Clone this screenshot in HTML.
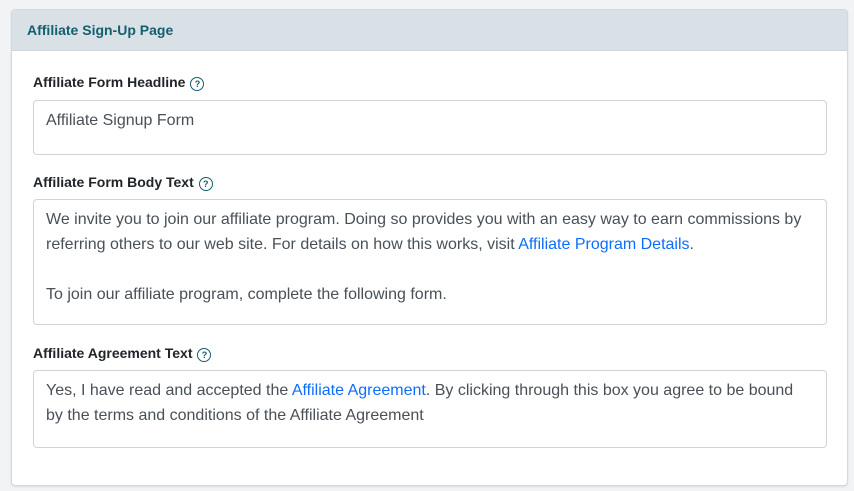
<!DOCTYPE html>
<html><head><style>
body{margin:0;background:#f1f3f5;font-family:"Liberation Sans",Arial,sans-serif;width:854px;height:491px;overflow:hidden}
.card{position:absolute;left:11px;top:9px;width:835px;height:475px;background:#fff;border:1px solid #d3d8dc;border-radius:4px;box-shadow:0 1px 2px rgba(0,0,0,.08);overflow:hidden}
.hd{height:40px;background:#dae1e6;border-bottom:1px solid #cfd6db;color:#145e6e;font-weight:bold;font-size:14px;line-height:41px;padding-left:15px}
.lbl{position:absolute;left:21px;font-size:14px;font-weight:bold;color:#212529}
.q{display:inline-block;width:12px;height:12px;border:1.3px solid #145e6e;border-radius:50%;color:#145e6e;font-size:9px;line-height:12px;text-align:center;margin-left:5px;vertical-align:0px;font-weight:bold}
.box{position:absolute;left:21px;width:768px;border:1px solid #ced4da;border-radius:4px;padding:7px 12px 8px;font-size:16px;line-height:25px;color:#495057}
a{color:#0d6efd;text-decoration:none}
</style></head><body>
<div class="card">
<div class="hd">Affiliate Sign-Up Page</div>
<div class="lbl" style="top:64px">Affiliate Form Headline<span class="q">?</span></div>
<div class="box" style="top:90px;height:38px">Affiliate Signup Form</div>
<div class="lbl" style="top:164px">Affiliate Form Body Text<span class="q">?</span></div>
<div class="box" style="top:189px;height:109px">We invite you to join our affiliate program. Doing so provides you with an easy way to earn commissions by referring others to our web site. For details on how this works, visit <a>Affiliate Program Details</a>.<br><br>To join our affiliate program, complete the following form.</div>
<div class="lbl" style="top:335px">Affiliate Agreement Text<span class="q">?</span></div>
<div class="box" style="top:360px;height:61px">Yes, I have read and accepted the <a>Affiliate Agreement</a>. By clicking through this box you agree to be bound by the terms and conditions of the Affiliate Agreement</div>
</div>
</body></html>
